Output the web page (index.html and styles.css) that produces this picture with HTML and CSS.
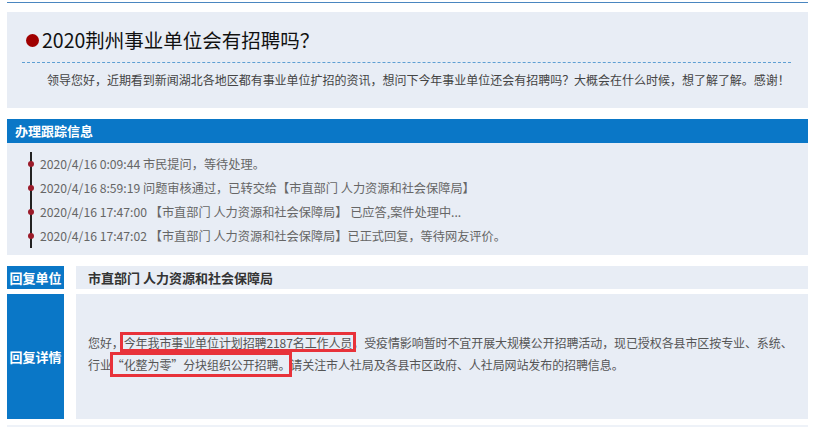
FILE: index.html
```html
<!DOCTYPE html>
<html lang="zh-CN">
<head>
  <meta charset="UTF-8" />
  <meta name="viewport" content="width=device-width, initial-scale=1.0"/>
  <title>2020荆州事业单位会有招聘吗？</title>
  <link rel="stylesheet" href="styles.css">
</head>
<body>
  <div class="topline"></div>

  <div class="ask">
    <h1><span class="dot"></span>2020荆州事业单位会有招聘吗？</h1>
    <p>领导您好，近期看到新闻湖北各地区都有事业单位扩招的资讯，想问下今年事业单位还会有招聘吗？大概会在什么时候，想了解了解。感谢！</p>
  </div>

  <div class="track">
    <div class="track-head">办理跟踪信息</div>
    <div class="track-body">
      <ul>
        <li>2020/4/16 0:09:44 市民提问，等待处理。</li>
        <li>2020/4/16 8:59:19 问题审核通过，已转交给【市直部门 人力资源和社会保障局】</li>
        <li>2020/4/16 17:47:00 【市直部门 人力资源和社会保障局】 已应答,案件处理中...</li>
        <li>2020/4/16 17:47:02 【市直部门 人力资源和社会保障局】已正式回复，等待网友评价。</li>
      </ul>
    </div>
  </div>

  <div class="reply">
    <div class="label">回复单位</div>
    <div class="value unit">市直部门 人力资源和社会保障局</div>
  </div>

  <div class="reply detail">
    <div class="label">回复详情</div>
    <div class="value">
      <p>您好，<span class="mark mark1">今年我市事业单位计划招聘2187名工作人员</span>，受疫情影响暂时不宜开展大规模公开招聘活动，现已授权各县市区按专业、系统、<br>行业<span class="mark mark2">“化整为零”分块组织公开招聘。</span>请关注市人社局及各县市区政府、人社局网站发布的招聘信息。</p>
    </div>
  </div>

  <div class="more"></div>
</body>
</html>
```

FILE: styles.css
```css
body {
  margin: 0;
  padding: 2px 6px 0 7px;
  font-family: "Noto Sans CJK SC", "Noto Sans", sans-serif;
  background-color: #ffffff;
  color: #444;
}

.topline {
  height: 1px;
  background-color: #4a86c0;
  margin-bottom: 9px;
}

/* 问题 */
.ask {
  background-color: #e8edf5;
  padding: 13px 17px 17px 15px;
}

.ask h1 {
  margin: 0;
  font-size: 19.5px;
  font-weight: normal;
  line-height: 30px;
  color: #111;
  padding-bottom: 7px;
  border-bottom: 1px dashed #5e9fd3;
  display: flex;
  align-items: center;
}

.dot {
  width: 13px;
  height: 13px;
  border-radius: 50%;
  background-color: #a00000;
  margin: 1px 3px 0 4px;
}

.ask p {
  margin: 6px 0 0;
  font-size: 12px;
  letter-spacing: -0.02px;
  line-height: 22px;
  text-indent: 25px;
  white-space: nowrap;
  color: #444;
}

/* 跟踪 */
.track {
  margin-top: 11px;
}

.track-head {
  background-color: #0a77c7;
  color: #fff;
  font-size: 13px;
  font-weight: bold;
  height: 24px;
  line-height: 24px;
  padding-left: 8px;
}

.track-body {
  background-color: #e8edf5;
  padding: 9px 0 7px 23px;
}

.track-body ul {
  list-style: none;
  margin: 0;
  padding: 0;
  border-left: 2px solid #222;
}

.track-body li {
  position: relative;
  font-size: 12.2px;
  line-height: 24px;
  padding-left: 8px;
  white-space: nowrap;
  color: #666;
}

.track-body li::before {
  content: "";
  position: absolute;
  left: -4px;
  top: 9px;
  width: 6px;
  height: 6px;
  border-radius: 50%;
  background-color: #9b1b2a;
}

/* 回复 */
.reply {
  display: grid;
  grid-template-columns: 57px 1fr;
  column-gap: 12px;
  margin-top: 11px;
}

.reply.detail {
  margin-top: 5px;
  height: 125px;
}

.label {
  background-color: #0a77c7;
  color: #fff;
  font-size: 13px;
  font-weight: bold;
  display: flex;
  align-items: center;
  justify-content: center;
  min-height: 23px;
}

.value {
  background-color: #e8edf5;
  padding-left: 12px;
  display: flex;
  align-items: center;
}

.unit {
  font-size: 13px;
  font-weight: bold;
  color: #333;
  height: 23px;
}

.detail .value {
  padding-bottom: 6px;
}

.value p {
  margin: 0;
  font-size: 12px;
  letter-spacing: -0.1px;
  line-height: 22px;
  white-space: nowrap;
  color: #555;
}

.mark {
  position: relative;
}

.mark::after {
  content: "";
  position: absolute;
  border: 3px solid #e8323a;
}

.mark1::after {
  left: -4px;
  right: -4px;
  top: -2px;
  bottom: -1px;
}

.mark2::after {
  left: -2px;
  right: -2px;
  top: -4px;
  bottom: -4px;
}

.more {
  margin-top: 6px;
  height: 20px;
  background-color: #eef2f8;
}
```
